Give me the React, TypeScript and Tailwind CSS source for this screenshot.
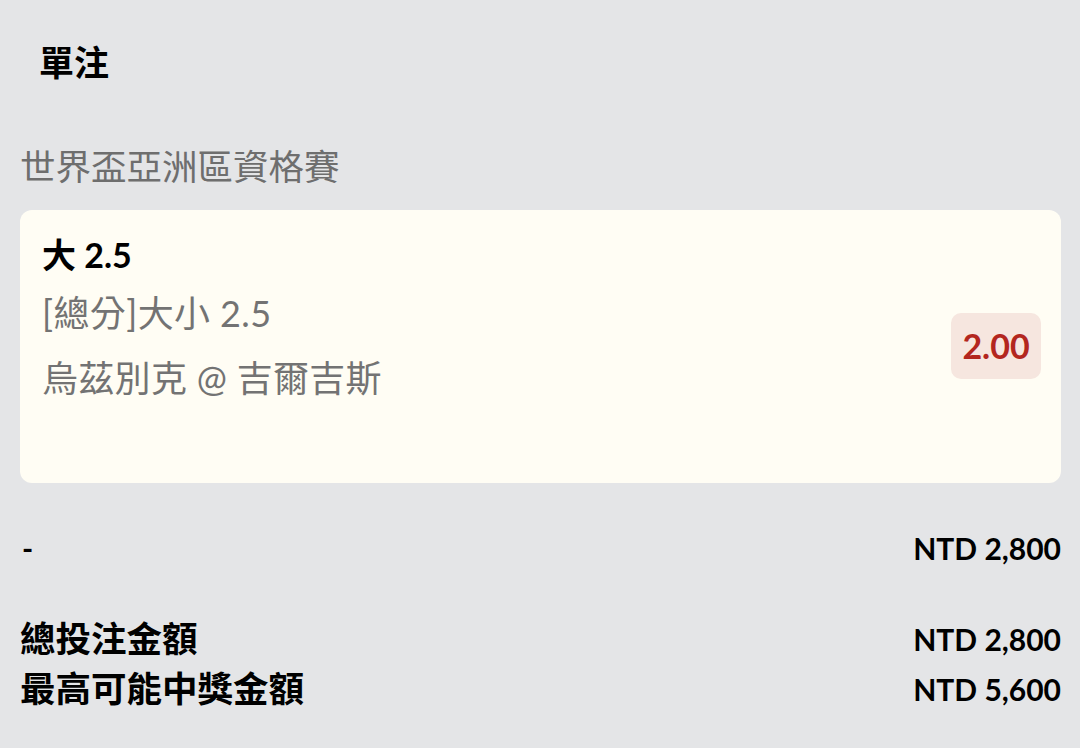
import React from "react";

const fontStack = "font-['Lato','Noto_Sans_CJK_TC',sans-serif]";

export default function App() {
  return (
    <main
      className={`min-h-screen w-full bg-[#e4e5e7] pl-[20px] pr-[19px] pt-[38px] pb-8 text-black ${fontStack}`}
    >
      {/* 標題 */}
      <h1 className="pl-[19px] text-[35px] leading-[48px] font-bold">單注</h1>

      {/* 賽事名稱 */}
      <p className="mt-[57px] text-[35.5px] leading-[48px] text-[#6e6e6e]">
        世界盃亞洲區資格賽
      </p>

      {/* 投注卡片 */}
      <section className="mt-[19px] flex items-center justify-between rounded-[12px] bg-[#fffdf4] pl-[22px] pr-[20px] pt-[21px] pb-[81px]">
        <div className="flex flex-col">
          <span className="text-[34px] leading-[48px] font-bold">大 2.5</span>
          <span className="mt-[10px] text-[36px] leading-[48px] tracking-[0.4px] text-[#737373]">
            [總分]大小 2.5
          </span>
          <span className="mt-[17px] text-[36px] leading-[48px] tracking-[0.3px] text-[#737373]">
            烏茲別克 @ 吉爾吉斯
          </span>
        </div>
        <div className="mt-[58px] flex h-[66px] w-[90px] items-center justify-center rounded-[10px] bg-[#f6e6df]">
          <span className="text-[34px] font-bold text-[#b3261e]">2.00</span>
        </div>
      </section>

      {/* 金額 */}
      <div className="mt-[41px] flex items-center justify-between pl-[2px] text-[30px] leading-[48px] font-bold">
        <span>-</span>
        <span>NTD 2,800</span>
      </div>

      <div className="mt-[42px] flex flex-col">
        <div className="flex items-center justify-between leading-[50px]">
          <span className="text-[35.5px] font-bold">總投注金額</span>
          <span className="text-[30px] font-bold">NTD 2,800</span>
        </div>
        <div className="flex items-center justify-between leading-[50px]">
          <span className="text-[35.5px] font-bold">最高可能中獎金額</span>
          <span className="text-[30px] font-bold">NTD 5,600</span>
        </div>
      </div>
    </main>
  );
}
